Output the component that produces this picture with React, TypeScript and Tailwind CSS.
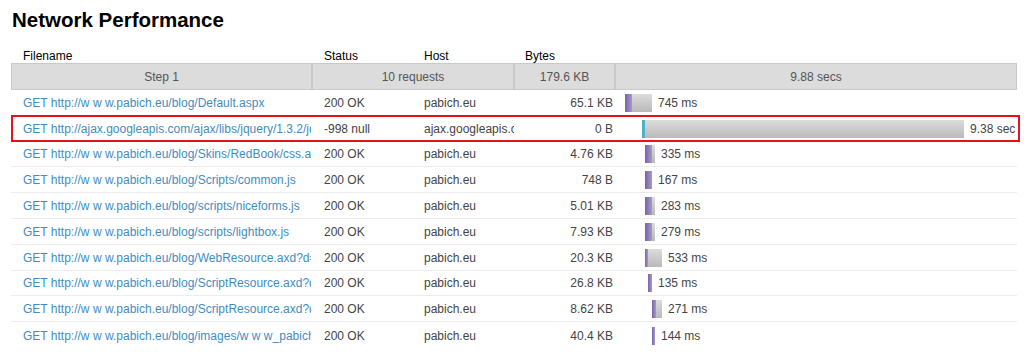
type Req = {
  url: string;
  status: string;
  host: string;
  bytes: string;
  start: number;
  width: number;
  purple: number;
  teal?: boolean;
  time: string;
  flagged?: boolean;
};

const requests: Req[] = [
  { url: "GET http://www.pabich.eu/blog/Default.aspx", status: "200 OK", host: "pabich.eu", bytes: "65.1 KB", start: 11, width: 27, purple: 7, time: "745 ms" },
  { url: "GET http://ajax.googleapis.com/ajax/libs/jquery/1.3.2/jquery.min.js", status: "-998 null", host: "ajax.googleapis.com", bytes: "0 B", start: 28, width: 322, purple: 3, teal: true, time: "9.38 sec", flagged: true },
  { url: "GET http://www.pabich.eu/blog/Skins/RedBook/css.axd", status: "200 OK", host: "pabich.eu", bytes: "4.76 KB", start: 31, width: 10, purple: 7, time: "335 ms" },
  { url: "GET http://www.pabich.eu/blog/Scripts/common.js", status: "200 OK", host: "pabich.eu", bytes: "748 B", start: 31, width: 7, purple: 7, time: "167 ms" },
  { url: "GET http://www.pabich.eu/blog/scripts/niceforms.js", status: "200 OK", host: "pabich.eu", bytes: "5.01 KB", start: 31, width: 10, purple: 7, time: "283 ms" },
  { url: "GET http://www.pabich.eu/blog/scripts/lightbox.js", status: "200 OK", host: "pabich.eu", bytes: "7.93 KB", start: 31, width: 10, purple: 7, time: "279 ms" },
  { url: "GET http://www.pabich.eu/blog/WebResource.axd?d=", status: "200 OK", host: "pabich.eu", bytes: "20.3 KB", start: 31, width: 17, purple: 3, time: "533 ms" },
  { url: "GET http://www.pabich.eu/blog/ScriptResource.axd?d=", status: "200 OK", host: "pabich.eu", bytes: "26.8 KB", start: 34, width: 4, purple: 4, time: "135 ms" },
  { url: "GET http://www.pabich.eu/blog/ScriptResource.axd?d=", status: "200 OK", host: "pabich.eu", bytes: "8.62 KB", start: 38, width: 10, purple: 4, time: "271 ms" },
  { url: "GET http://www.pabich.eu/blog/images/www_pabich_eu.png", status: "200 OK", host: "pabich.eu", bytes: "40.4 KB", start: 38, width: 3, purple: 3, time: "144 ms" },
];

function Url({ text }: { text: string }) {
  const parts = text.split("www");
  return (
    <>
      {parts.map((p, i) => (
        <span key={i}>
          {i > 0 && (
            <>
              <span className="tracking-[3.4px]">ww</span>w
            </>
          )}
          {p}
        </span>
      ))}
    </>
  );
}

export default function App() {
  return (
    <div className="w-[1024px] h-[357px] bg-white overflow-hidden pl-[11px] pt-[8px] text-[12px] font-['Liberation_Sans',Arial,sans-serif]">
      <h1 className="text-[20.5px] font-bold text-black leading-[24px] pl-[1px]">Network Performance</h1>

      <div className="w-[1006px] mt-[17px]">
        {/* column titles */}
        <div className="flex h-[14px] items-end text-black leading-[14px]">
          <div className="w-[300px] pl-[12px]">Filename</div>
          <div className="w-[100px] pl-[13px]">Status</div>
          <div className="w-[102px] pl-[13px]">Host</div>
          <div className="w-[101px] pl-[12px]">Bytes</div>
        </div>

        {/* summary bar */}
        <div className="flex h-[27px] bg-[#dcdcdc] border border-[#c9c9c9] text-[#555] items-stretch">
          <div className="w-[299px] flex items-center justify-center">Step 1</div>
          <div className="w-[202px] flex items-center justify-center border-l-2 border-[#c9c9c9]">10 requests</div>
          <div className="w-[101px] flex items-center justify-center border-l-2 border-[#c9c9c9]">179.6 KB</div>
          <div className="flex-1 flex items-center justify-center border-l-2 border-[#c9c9c9]">9.88 secs</div>
        </div>

        {/* request rows */}
        {requests.map((r, i) => (
          <div
            key={i}
            className={`relative flex h-[25.8px] pt-[1px] items-center whitespace-nowrap ${i < requests.length - 1 ? "border-b border-[#ececec]" : ""}`}
          >
            <div className="w-[300px] pl-[12px] overflow-hidden text-[#3f8dbf]">
              <Url text={r.url} />
            </div>
            <div className="w-[100px] pl-[13px] overflow-hidden text-[#444]">{r.status}</div>
            <div className="w-[103px] pl-[13px] overflow-hidden text-[#444]">{r.host}</div>
            <div className="w-[100px] pr-[1px] text-right text-[#444]">{r.bytes}</div>
            <div className="flex-1 flex items-center overflow-hidden h-full">
              <div
                className="flex h-[18px] shrink-0 bg-gradient-to-b from-[#dcdcdc] to-[#b9b9b9]"
                style={{ marginLeft: r.start, width: r.width }}
              >
                <div
                  className={r.teal ? "h-full bg-[#4bb3c4]" : "h-full bg-gradient-to-r from-[#7a64a8] to-[#a898cc]"}
                  style={{ width: r.purple }}
                />
              </div>
              <span className="ml-[6px] text-[#444]">{r.time}</span>
            </div>
            {r.flagged && (
              <div className="absolute left-0 right-[-3px] top-[-1px] bottom-[-1px] border-2 border-[#e8101a] pointer-events-none" />
            )}
          </div>
        ))}
      </div>
    </div>
  );
}
